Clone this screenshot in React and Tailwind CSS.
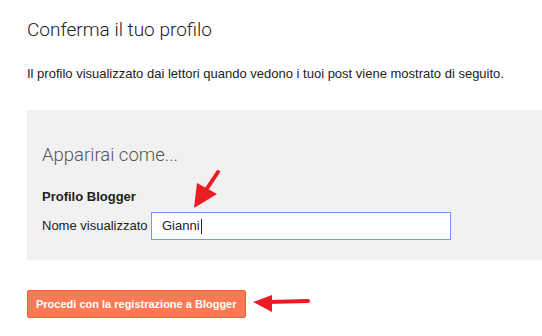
export default function App() {
  return (
    <div className="relative w-[542px] h-[336px] bg-white overflow-hidden" style={{ fontFamily: '"Liberation Sans", Arial, sans-serif' }}>
      <div className="pl-[27px] pt-[18px]">
        <h1 className="text-[19px] leading-[24px] font-light text-[#222]" style={{ fontFamily: 'Roboto, "Open Sans", sans-serif' }}>
          Conferma il tuo profilo
        </h1>
        <p className="mt-[24px] text-[13px] leading-[16px] text-[#222]">
          Il profilo visualizzato dai lettori quando vedono i tuoi post viene mostrato di seguito.
        </p>
        <div className="mt-[28px] h-[150px] bg-[#f1f1f1] pl-[15px] pt-[33px]">
          <h2 className="text-[18.5px] leading-[24px] font-light text-[#555]" style={{ fontFamily: 'Roboto, "Open Sans", sans-serif' }}>
            Apparirai come...
          </h2>
          <div className="mt-[22px] text-[13px] leading-[16px] font-bold text-[#222]">Profilo Blogger</div>
          <div className="mt-[7px] flex items-center">
            <span className="text-[13px] text-[#222] w-[109px]">Nome visualizzato</span>
            <div className="w-[300px] h-[28px] border border-[#6d9df0] bg-white flex items-center pl-[10px] text-[13px] text-[#222]">
              Gianni<span className="inline-block w-px h-[15px] bg-[#222] ml-px" />
            </div>
          </div>
        </div>
        <button className="mt-[30px] h-[28px] px-[8px] bg-[#f97a54] border border-[#f25e2c] rounded-[2px] text-white text-[11px] font-bold">
          Procedi con la registrazione a Blogger
        </button>
      </div>
      <svg className="absolute left-0 top-0" width="542" height="336" viewBox="0 0 542 336">
        <line x1="218" y1="172" x2="206" y2="190" stroke="#ec1c24" strokeWidth="4" strokeLinecap="round" />
        <polygon points="194,208 197,183 217,194" fill="#ec1c24" />
        <line x1="308" y1="301" x2="268" y2="302" stroke="#ec1c24" strokeWidth="4" strokeLinecap="round" />
        <polygon points="253,302 272,295 272,312" fill="#ec1c24" />
      </svg>
    </div>
  );
}
